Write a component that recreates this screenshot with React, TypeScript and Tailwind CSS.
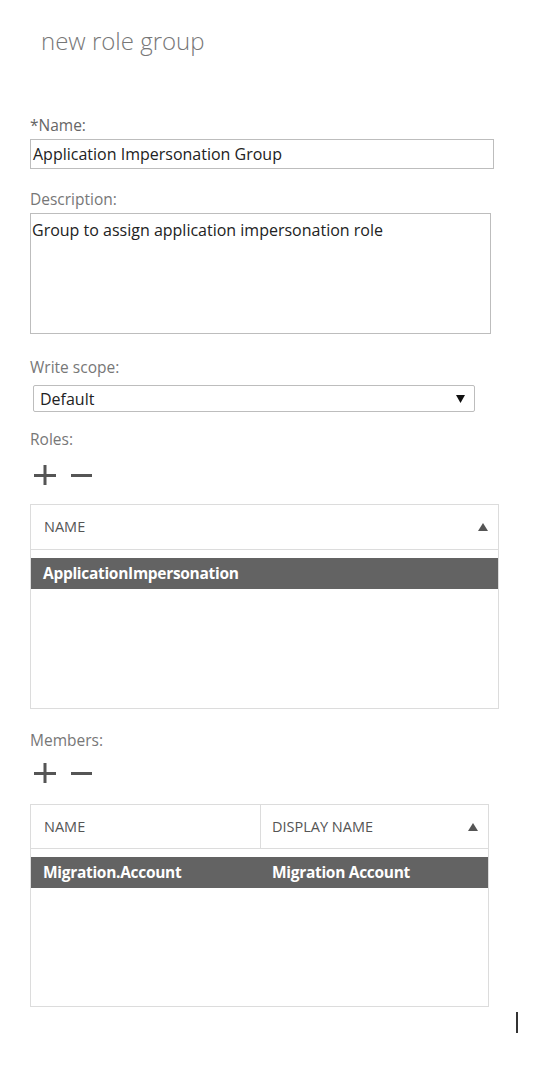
import React from "react";

function PlusMinus() {
  return (
    <div className="flex items-center gap-[15px] pl-[4px] h-[20px]">
      <svg width="22" height="20" viewBox="0 0 22 20">
        <path d="M0 10.5H22M11 0V20" stroke="#555" strokeWidth="3" />
      </svg>
      <svg width="21" height="20" viewBox="0 0 21 20">
        <path d="M0 10.5H21" stroke="#555" strokeWidth="3" />
      </svg>
    </div>
  );
}

function SortUp() {
  return (
    <svg width="10" height="8" viewBox="0 0 10 8">
      <path d="M5 0L10 8H0Z" fill="#555" />
    </svg>
  );
}

export default function App() {
  return (
    <div className="relative w-[546px] h-[1068px] bg-white font-['Open_Sans','Noto_Sans',sans-serif] overflow-hidden">
      {/* Title */}
      <h1 className="pl-[41px] pt-[24px] text-[24px] leading-[34px] font-light text-[#777]">
        new role group
      </h1>

      <div className="pl-[30px]">
        <label className="block mt-[57px] text-[15.5px] leading-[20px] text-[#666]">*Name:</label>
        <div className="mt-[4px] w-[464px] h-[30px] border border-[#bdbdbd] flex items-center pl-[2px] text-[16px] text-[#222]">
          Application Impersonation Group
        </div>

        <label className="block mt-[20px] text-[15.5px] leading-[20px] text-[#777]">Description:</label>
        <div className="mt-[4px] w-[461px] h-[121px] border border-[#bdbdbd] pl-[1px] pt-[5px] text-[16px] leading-[22px] text-[#222]">
          Group to assign application impersonation role
        </div>

        <label className="block mt-[23px] text-[15.5px] leading-[20px] text-[#777]">Write scope:</label>
        <div className="mt-[8px] ml-[3px] w-[442px] h-[27px] border border-[#bdbdbd] rounded-[2px] flex items-center justify-between pl-[6px] pr-[9px] text-[16px] text-[#222]">
          <span>Default</span>
          <svg width="9" height="9" viewBox="0 0 9 9">
            <path d="M0 1H9L4.5 9Z" fill="#111" />
          </svg>
        </div>

        <label className="block mt-[17px] text-[15.5px] leading-[20px] text-[#777]">Roles:</label>
        <div className="mt-[16px]">
          <PlusMinus />
        </div>

        {/* Roles table */}
        <div className="mt-[19px] w-[469px] h-[205px] border border-[#dcdcdc]">
          <div className="h-[45px] border-b border-[#dcdcdc] flex items-center justify-between pl-[13px] pr-[10px] text-[14.5px] text-[#555]">
            <span>NAME</span>
            <SortUp />
          </div>
          <div className="mt-[8px] h-[31px] bg-[#636363] flex items-center pl-[12px] text-[15.5px] font-bold text-white tracking-[-0.3px]">
            ApplicationImpersonation
          </div>
        </div>

        <label className="block mt-[21px] text-[15.5px] leading-[20px] text-[#777]">Members:</label>
        <div className="mt-[13px]">
          <PlusMinus />
        </div>

        {/* Members table */}
        <div className="mt-[21px] w-[459px] h-[203px] border border-[#dcdcdc]">
          <div className="h-[44px] border-b border-[#dcdcdc] flex text-[14.5px] text-[#555]">
            <div className="w-[230px] border-r border-[#dcdcdc] flex items-center pl-[13px]">NAME</div>
            <div className="flex-1 flex items-center justify-between pl-[11px] pr-[10px]">
              <span>DISPLAY NAME</span>
              <SortUp />
            </div>
          </div>
          <div className="mt-[8px] h-[31px] bg-[#636363] flex items-center text-[15.5px] font-bold text-white tracking-[-0.3px]">
            <span className="w-[229px] pl-[12px]">Migration.Account</span>
            <span className="pl-[12px]">Migration Account</span>
          </div>
        </div>
      </div>

      {/* text cursor */}
      <div className="ml-[516px] mt-[5px] w-[2px] h-[21px] bg-[#333]" />
    </div>
  );
}
